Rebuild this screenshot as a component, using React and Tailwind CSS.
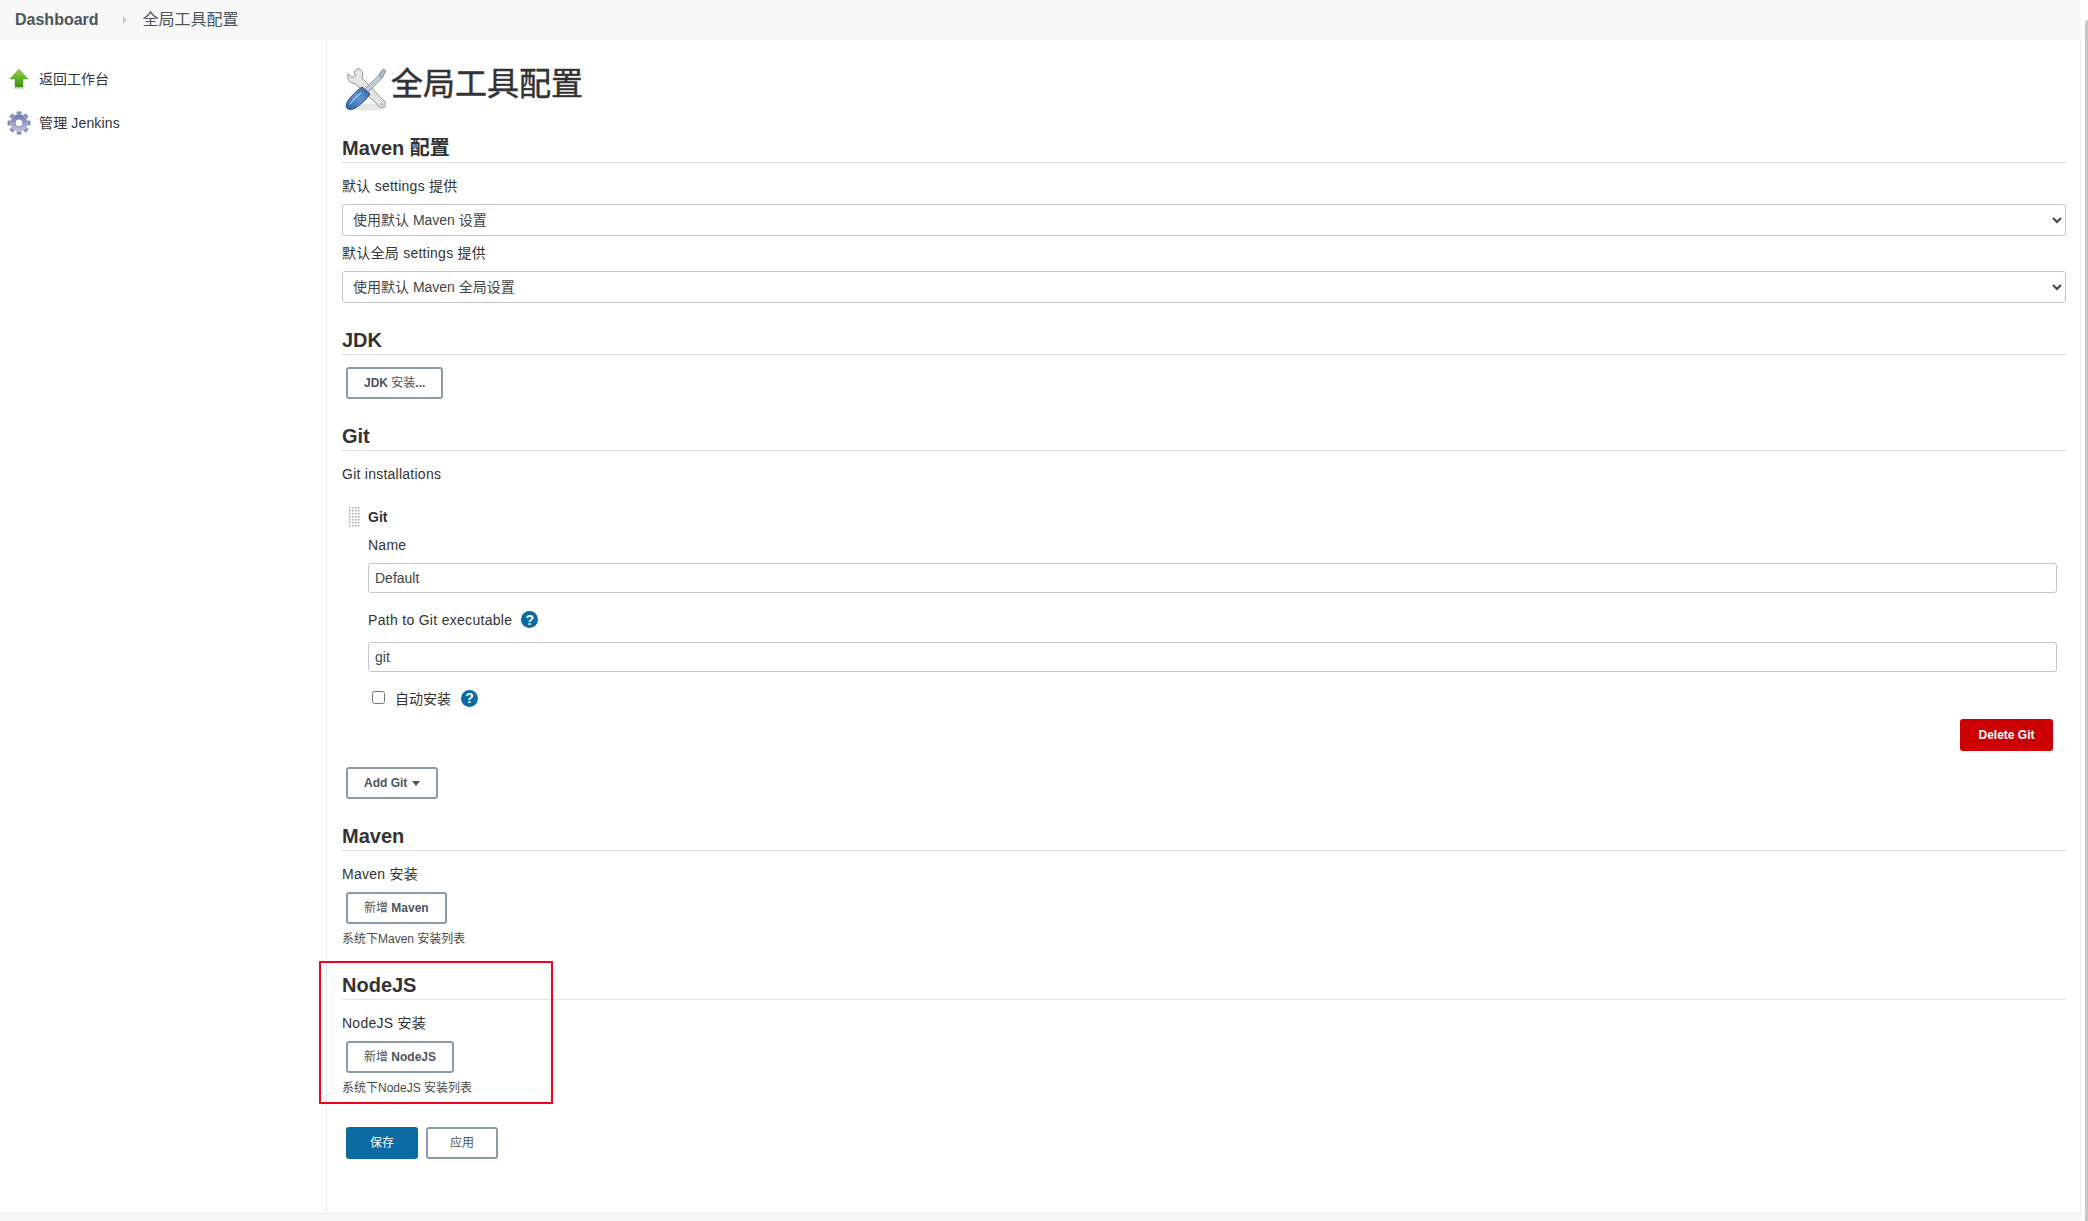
import React from "react";

function ArrowIcon() {
  return (
    <svg width="20" height="22" viewBox="0 0 20 22">
      <defs>
        <linearGradient id="arrowFill" x1="0" y1="0" x2="0" y2="1">
          <stop offset="0" stopColor="#9ad84a" />
          <stop offset="0.55" stopColor="#5fae1f" />
          <stop offset="1" stopColor="#3f8f12" />
        </linearGradient>
      </defs>
      <ellipse cx="10" cy="20" rx="6" ry="1.4" fill="#000" opacity="0.15" />
      <path d="M10 1 L19 11 H14 V19 H6 V11 H1 Z" fill="url(#arrowFill)" stroke="#5c9a2a" strokeWidth="0.5" />
    </svg>
  );
}

function GearIcon() {
  const teeth = [0, 45, 90, 135, 180, 225, 270, 315];
  return (
    <svg width="24" height="24" viewBox="0 0 24 24">
      <defs>
        <linearGradient id="gearFill" x1="0" y1="0" x2="0" y2="1">
          <stop offset="0" stopColor="#6f7aa8" />
          <stop offset="0.6" stopColor="#a3a8cf" />
          <stop offset="1" stopColor="#c4c4dc" />
        </linearGradient>
      </defs>
      {teeth.map((deg) => (
        <rect key={deg} x="9.6" y="0.6" width="4.8" height="5" rx="1" fill="url(#gearFill)" transform={`rotate(${deg} 12 12)`} />
      ))}
      <circle cx="12" cy="12" r="8.4" fill="url(#gearFill)" />
      <circle cx="12" cy="12" r="4" fill="#fff" stroke="#6a7099" strokeWidth="0.7" />
    </svg>
  );
}

function ToolsIcon() {
  return (
    <svg width="49" height="44" viewBox="0 0 49 44" className="shrink-0">
      <defs>
        <linearGradient id="toolBlue" x1="0" y1="1" x2="1" y2="0">
          <stop offset="0" stopColor="#2a5fa5" />
          <stop offset="0.5" stopColor="#5f93cf" />
          <stop offset="1" stopColor="#2f65a8" />
        </linearGradient>
      </defs>
      <ellipse cx="24" cy="40" rx="21" ry="3.5" fill="#000" opacity="0.1" />
      <path
        d="M16 1.5 L12 5 L13.5 9 L10 10.5 L6 7 C4.5 12 8 17 13 16.5 L38 40 C41 42 45 38 43 35 L20 11 C22 6 20 2 16 1.5 Z"
        fill="#e4e6e3"
        stroke="#90948f"
        strokeWidth="1"
      />
      <circle cx="40" cy="37.5" r="1.3" fill="#a9adab" />
      <path d="M23 22 L37 8 L40 11 L26 25 Z" fill="#c5ccd3" stroke="#7f8a94" strokeWidth="0.8" />
      <path d="M37 8 L41 2 L44 4 L40 11 Z" fill="#aebccb" stroke="#6f7f8e" strokeWidth="0.8" />
      <path
        d="M20 20 L28 27 C24 33 16 40 11 42 C6 43.5 3.5 41 4.5 37 C6 32 14 24 20 20 Z"
        fill="url(#toolBlue)"
        stroke="#204a85"
        strokeWidth="1"
      />
      <path d="M8 37 C11 33 15 29 19 26" stroke="#a5c6ea" strokeWidth="1.2" fill="none" strokeLinecap="round" />
    </svg>
  );
}

function DragDots() {
  const dots = [];
  for (let r = 0; r < 7; r++) {
    for (let c = 0; c < 4; c++) {
      dots.push(<rect key={`${r}-${c}`} x={c * 3} y={r * 3} width="1.5" height="1.5" fill="#a8a8a8" />);
    }
  }
  return (
    <svg width="11" height="20" viewBox="0 0 11 20">
      {dots}
    </svg>
  );
}

function HelpIcon({ className = "" }) {
  return (
    <span className={`flex h-[17px] w-[17px] items-center justify-center rounded-full bg-[#0b6aa2] text-sm font-bold leading-none text-white ${className}`}>
      ?
    </span>
  );
}

function Heading({ children, className }) {
  return (
    <h2 className={`border-b border-[#e3e3e3] pb-[2px] text-xl leading-6 font-bold text-[#333] ${className}`}>
      {children}
    </h2>
  );
}

function Label({ children, className = "" }) {
  return <div className={`h-5 text-sm leading-5 tracking-[0.25px] text-[#333] ${className}`}>{children}</div>;
}

function OutlineButton({ children, className = "" }) {
  return (
    <button className={`ml-1 block h-8 rounded-[3px] border-2 border-[#8b9bab] bg-white px-4 text-xs font-bold text-[#4d545d] ${className}`}>
      {children}
    </button>
  );
}

export default function App() {
  return (
    <div className="relative flex h-screen w-full flex-col overflow-hidden bg-white font-['Liberation_Sans','Noto_Sans_CJK_SC',sans-serif]">
      <div className="flex h-10 w-[2081px] shrink-0 items-center bg-[#f8f8f8] pl-[15px] text-[#4d545d]">
        <span className="text-base font-bold">Dashboard</span>
        <span className="mr-4 ml-6 h-0 w-0 border-y-4 border-l-4 border-y-transparent border-l-[#c8c8c8]" />
        <span className="text-base">全局工具配置</span>
      </div>

      <div className="flex w-[2081px] flex-1 border-r border-[#ececec]">
        {/* Sidebar */}
        <aside className="w-[327px] shrink-0 border-r border-[#e8e8e8] pt-[17px] pl-[7px] text-sm text-[#333]">
          <div className="flex h-11 items-center gap-2">
            <span className="flex w-6 justify-center"><ArrowIcon /></span>
            返回工作台
          </div>
          <div className="flex h-11 items-center gap-2 tracking-[0.15px]">
            <span className="flex w-6 justify-center"><GearIcon /></span>
            管理 Jenkins
          </div>
        </aside>

        {/* Form */}
        <main className="flex-1 pt-[27px] pr-[14px] pl-[15px]">
          <div className="flex h-[43px] items-start">
            <ToolsIcon />
            <h1 className="mt-px text-[32px] leading-8 font-normal text-[#333] [-webkit-text-stroke:0.5px_#333]">全局工具配置</h1>
          </div>

          <Heading className="mt-[26px]">Maven 配置</Heading>
          <Label className="mt-[13px]">默认 settings 提供</Label>
          <select className="mt-2 block h-8 w-full rounded-[3px] border border-[#c6c6c6] bg-white pl-[6px] text-sm text-[#444]">
            <option>使用默认 Maven 设置</option>
          </select>
          <Label className="mt-[7px]">默认全局 settings 提供</Label>
          <select className="mt-2 block h-8 w-full rounded-[3px] border border-[#c6c6c6] bg-white pl-[6px] text-sm text-[#444]">
            <option>使用默认 Maven 全局设置</option>
          </select>

          <Heading className="mt-[25px]">JDK</Heading>
          <OutlineButton className="mt-3">JDK <span className="font-normal">安装</span>...</OutlineButton>

          <Heading className="mt-[25px]">Git</Heading>
          <Label className="mt-[13px]">Git installations</Label>
          <div className="mt-[23px] flex h-5 items-center pl-[7px]">
            <DragDots />
            <span className="ml-2 text-sm font-bold text-[#333]">Git</span>
          </div>
          <div className="pr-[9px] pl-[26px]">
            <Label className="mt-2">Name</Label>
            <input
              readOnly
              value="Default"
              className="mt-2 block h-[30px] w-full rounded-[3px] border border-[#c6c6c6] px-[6px] text-sm text-[#444]"
            />
            <div className="mt-[17px] flex h-5 items-center gap-[9px] text-sm tracking-[0.3px] text-[#333]">
              Path to Git executable
              <HelpIcon className="-mt-px" />
            </div>
            <input
              readOnly
              value="git"
              className="mt-3 block h-[30px] w-full rounded-[3px] border border-[#c6c6c6] px-[6px] text-sm text-[#444]"
            />
            <div className="mt-4 flex h-5 items-center pl-1 text-sm text-[#333]">
              <input type="checkbox" className="m-0 -mt-px h-[13px] w-[13px]" />
              <span className="mt-px ml-[10px]">自动安装</span>
              <span className="ml-[10px]"><HelpIcon /></span>
            </div>
          </div>
          <div className="mt-[11px] flex justify-end pr-[13px]">
            <button className="h-8 w-[93px] rounded-[3px] bg-[#cc0003] text-xs font-bold text-white">Delete Git</button>
          </div>
          <button className="mt-4 ml-1 flex h-8 items-center gap-[5px] rounded-[3px] border-2 border-[#8b9bab] bg-white px-4 text-xs font-bold text-[#4d545d]">
            Add Git
            <span className="h-0 w-0 border-x-[4.5px] border-t-[5px] border-x-transparent border-t-[#4d545d]" />
          </button>

          <Heading className="mt-[25px]">Maven</Heading>
          <Label className="mt-[13px]">Maven 安装</Label>
          <OutlineButton className="mt-2"><span className="font-normal">新增</span> Maven</OutlineButton>
          <div className="mt-[7px] h-4 text-xs leading-4 text-[#4a4a4a]">系统下Maven 安装列表</div>

          <Heading className="mt-[26px]">NodeJS</Heading>
          <Label className="mt-[13px]">NodeJS 安装</Label>
          <OutlineButton className="mt-2"><span className="font-normal">新增</span> NodeJS</OutlineButton>
          <div className="mt-[7px] h-4 text-xs leading-4 text-[#4a4a4a]">系统下NodeJS 安装列表</div>

          <div className="mt-[31px] ml-1 flex gap-2">
            <button className="h-8 w-[72px] rounded-[3px] bg-[#0b6aa2] text-xs text-white">保存</button>
            <button className="h-8 w-[72px] rounded-[3px] border-2 border-[#8b9bab] bg-white text-xs text-[#4d545d]">应用</button>
          </div>
        </main>
      </div>

      <div className="h-2 w-[2081px] shrink-0 border-t border-[#ececec] bg-[#f8f8f8]" />

      {/* Annotation box and window scrollbar lie over the page */}
      <div className="absolute top-[961px] left-[319px] h-[143px] w-[234px] border-2 border-[#f5001d]" />
      <div className="absolute top-5 right-0 bottom-0 w-[3px] rounded-tl-[3px] bg-[#c8c8c8]" />
    </div>
  );
}
